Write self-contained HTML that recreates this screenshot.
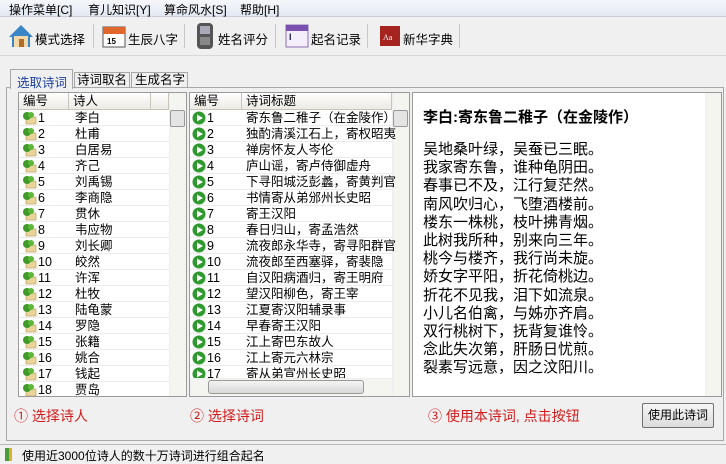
<!DOCTYPE html>
<html><head><meta charset="utf-8"><style>
*{margin:0;padding:0;box-sizing:border-box}
body{width:726px;height:464px;background:#f0f0f0;font-family:"Liberation Sans","Noto Sans CJK SC",sans-serif;font-size:12px;color:#000;position:relative;overflow:hidden}
.a{position:absolute}
.menu{left:0;top:0;width:726px;height:17px;background:linear-gradient(#f6f7fb,#e3e8f2);border-bottom:1px solid #c9ced8}
.menu span{position:absolute;top:1px}
.tb{top:18px;left:0;width:726px;height:38px;border-bottom:1px solid #d8d8d8}
.tb span{position:absolute;top:11px;font-size:12.5px}
.sep{position:absolute;top:24px;width:1px;height:24px;background:#c8c8c8}
.list{background:#fff;border:1px solid #9a9a9a}
.hdr{position:absolute;top:0;height:17px;background:linear-gradient(#fff,#eceae4);border-right:1px solid #c8c5bc;border-bottom:1px solid #c8c5bc;padding-left:4px;line-height:16px;font-size:12.5px}
.row{position:absolute;height:16px;line-height:16px;border-bottom:1px solid #ececec;font-size:12.5px}
.sb{position:absolute;background:#f4f4f0;border-left:1px solid #eee}
.red{color:#d21c1c;font-size:14px;top:406px}
.tab{position:absolute;white-space:nowrap;overflow:hidden;font-size:12.5px;border:1px solid #a8a8a8;border-bottom:none}
</style></head><body>
<div class="a menu"><span style="left:9px">操作菜单[C]</span><span style="left:88px">育儿知识[Y]</span><span style="left:164px">算命风水[S]</span><span style="left:240px">帮助[H]</span></div>
<div class="a tb">
<svg class="a" style="left:8px;top:6px" width="26" height="24"><polygon points="13,1 1,13 4,13 4,23 22,23 22,13 25,13" fill="#3b86c8"/><rect x="6" y="12" width="14" height="11" fill="#f1d9a8"/><rect x="11" y="15" width="5" height="8" fill="#b36b28"/></svg>
<span style="left:35px">模式选择</span><div class="sep" style="left:93px;top:6px"></div>
<svg class="a" style="left:102px;top:6px" width="24" height="24"><rect x="1" y="3" width="22" height="20" fill="#fff" stroke="#555"/><rect x="1" y="3" width="22" height="7" fill="#e0662c"/><text x="5" y="20" font-size="8" font-weight="bold" font-family="Liberation Sans">15</text></svg>
<span style="left:128px">生辰八字</span><div class="sep" style="left:184px;top:6px"></div>
<svg class="a" style="left:196px;top:4px" width="18" height="28"><rect x="1" y="1" width="16" height="26" rx="4" fill="#555"/><rect x="4" y="4" width="10" height="8" fill="#aab"/><rect x="4" y="15" width="10" height="8" fill="#888"/></svg>
<span style="left:218px">姓名评分</span><div class="sep" style="left:275px;top:6px"></div>
<svg class="a" style="left:285px;top:6px" width="24" height="24"><rect x="1" y="1" width="22" height="22" fill="#f4eefa" stroke="#8b6fb5"/><rect x="1" y="1" width="22" height="6" fill="#7a50b0"/><text x="4" y="16" font-size="9" font-weight="bold" fill="#224">I</text></svg>
<span style="left:311px">起名记录</span><div class="sep" style="left:367px;top:6px"></div>
<svg class="a" style="left:379px;top:7px" width="22" height="22"><rect x="1" y="1" width="20" height="20" fill="#a52420"/><text x="4" y="15" font-size="8" fill="#fff" font-family="Liberation Serif">Aa</text></svg>
<span style="left:403px">新华字典</span><div class="sep" style="left:459px;top:6px"></div>
</div>
<div class="a" style="left:6px;top:87px;width:718px;height:354px;border:1px solid #a8a8a8;background:#f0f0f0"></div>
<div class="tab" style="left:10px;top:69px;width:63px;height:20px;background:#f0f0f0;color:#1a3fa0;padding:2px 0 0 6px">选取诗词</div>
<div class="tab" style="left:74px;top:72px;width:56px;height:16px;padding-left:2px;line-height:15px">诗词取名</div>
<div class="tab" style="left:131px;top:72px;width:57px;height:16px;padding-left:3px;line-height:15px">生成名字</div>
<div class="a list" style="left:18px;top:92px;width:169px;height:305px;overflow:hidden" id="L">
<div class="hdr" style="left:0;width:50px">编号</div><div class="hdr" style="left:50px;width:82px">诗人</div><div class="hdr" style="left:132px;width:18px"></div>
<div class="sb" style="left:150px;top:0;width:17px;height:303px"></div>
<div class="a" style="left:151px;top:17px;width:15px;height:17px;background:#e4e4e4;border:1px solid #999;border-radius:2px"></div>
</div>
<div class="a list" style="left:189px;top:92px;width:221px;height:305px;overflow:hidden" id="M">
<div class="hdr" style="left:0;width:52px">编号</div><div class="hdr" style="left:52px;width:150px">诗词标题</div>
<div class="sb" style="left:202px;top:0;width:17px;height:303px"></div>
<div class="a" style="left:203px;top:17px;width:15px;height:17px;background:#e4e4e4;border:1px solid #999;border-radius:2px"></div>
<div class="sb" style="left:0;top:285px;width:202px;height:18px;border-top:1px solid #eee;z-index:3"></div>
<div class="a" style="left:18px;top:287px;width:156px;height:14px;background:linear-gradient(#f4f4f4,#d8d8d8);border:1px solid #999;border-radius:3px;z-index:4"></div>
</div>
<div class="a list" style="left:412px;top:92px;width:310px;height:305px">
<div class="sb" style="left:292px;top:0;width:16px;height:303px"></div>
<div class="a" style="left:10px;top:13px;font-size:15px;font-weight:bold">李白:寄东鲁二稚子（在金陵作）</div>
<div class="a" style="left:10px;top:48px;font-size:15px;line-height:18.2px">吴地桑叶绿，吴蚕已三眠。<br>我家寄东鲁，谁种龟阴田。<br>春事已不及，江行复茫然。<br>南风吹归心，飞堕酒楼前。<br>楼东一株桃，枝叶拂青烟。<br>此树我所种，别来向三年。<br>桃今与楼齐，我行尚未旋。<br>娇女字平阳，折花倚桃边。<br>折花不见我，泪下如流泉。<br>小儿名伯禽，与姊亦齐肩。<br>双行桃树下，抚背复谁怜。<br>念此失次第，肝肠日忧煎。<br>裂素写远意，因之汶阳川。</div>
</div>
<div class="a red" style="left:14px">① 选择诗人</div>
<div class="a red" style="left:190px">② 选择诗词</div>
<div class="a red" style="left:428px">③ 使用本诗词, 点击按钮</div>
<div class="a" style="left:642px;top:403px;width:72px;height:25px;border:1px solid #707070;border-radius:2px;background:linear-gradient(#f6f6f6,#dcdcdc);text-align:center;line-height:23px">使用此诗词</div>
<div class="a" style="left:0;top:444px;width:726px;height:20px;border-top:1px solid #b8b8b8">
<div class="a" style="left:5px;top:3px;width:7px;height:13px;background:#4a9a3a;border-right:3px solid #d8b030"></div>
<div class="a" style="left:22px;top:2px">使用近3000位诗人的数十万诗词进行组合起名</div></div>
<script>
var poets="李白 杜甫 白居易 齐己 刘禹锡 李商隐 贯休 韦应物 刘长卿 皎然 许浑 杜牧 陆龟蒙 罗隐 张籍 姚合 钱起 贾岛".split(" ");
var titles="寄东鲁二稚子（在金陵作） 独酌清溪江石上，寄权昭夷 禅房怀友人岑伦 庐山谣，寄卢侍御虚舟 下寻阳城泛彭蠡，寄黄判官 书情寄从弟邠州长史昭 寄王汉阳 春日归山，寄孟浩然 流夜郎永华寺，寄寻阳群官 流夜郎至西塞驿，寄裴隐 自汉阳病酒归，寄王明府 望汉阳柳色，寄王宰 江夏寄汉阳辅录事 早春寄王汉阳 江上寄巴东故人 江上寄元六林宗 寄从弟宣州长史昭 ".split(" ");
var L=document.getElementById("L"),M=document.getElementById("M"),h="",m="";
for(var i=0;i<18;i++){var t=17+i*16;
h+='<div class="row" style="left:0;top:'+t+'px;width:150px"><svg style="position:absolute;left:2px;top:1px" width="16" height="14"><rect x="5" y="6" width="10" height="7" fill="#e8d49a" stroke="#b89a50" stroke-width=".6"/><circle cx="6" cy="5" r="4" fill="#3f9a2a"/><circle cx="10" cy="4" r="3" fill="#5cb83a"/></svg><span style="position:absolute;left:19px">'+(i+1)+'</span><span style="position:absolute;left:56px">'+poets[i]+'</span></div>';
if(i<17)m+='<div class="row" style="left:0;top:'+t+'px;width:202px"><svg style="position:absolute;left:2px;top:1px" width="14" height="14"><circle cx="7" cy="7" r="6.5" fill="#2f9a2f"/><polygon points="5,3.5 11,7 5,10.5" fill="#fff"/></svg><span style="position:absolute;left:17px">'+(i+1)+'</span><span style="position:absolute;left:56px;white-space:nowrap">'+titles[i]+'</span></div>';}
L.insertAdjacentHTML("beforeend",h);M.insertAdjacentHTML("beforeend",m);
</script>
</body></html>
